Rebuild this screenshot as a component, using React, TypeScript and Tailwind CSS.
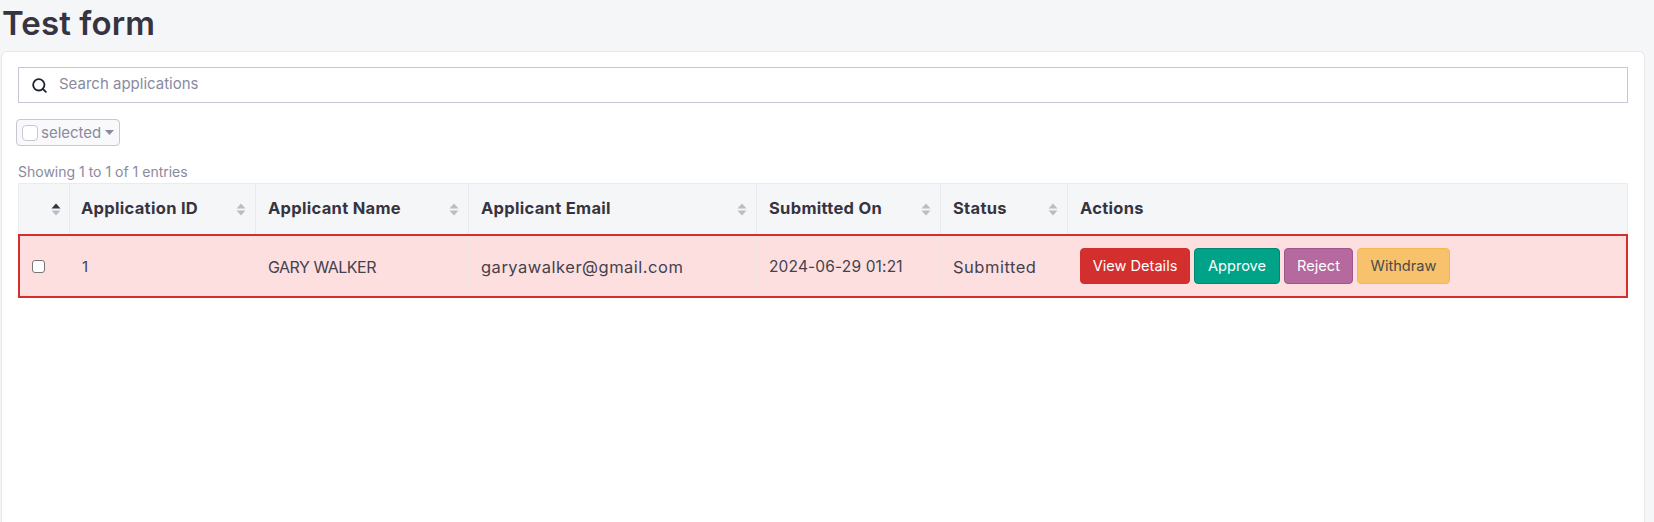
import { Search } from 'lucide-react';

const FONT = 'font-["Inter",sans-serif]';

const COLS = [
  { label: '', width: 'w-[51px]', pad: 'pr-[8px] pl-[30px]', sort: 'asc' },
  { label: 'Application ID', width: 'w-[186px]', pad: 'pl-[11px] pr-[9px]' },
  { label: 'Applicant Name', width: 'w-[213px]', pad: 'pl-[12px] pr-[9px]' },
  { label: 'Applicant Email', width: 'w-[288px]', pad: 'pl-[12px] pr-[9px]' },
  { label: 'Submitted On', width: 'w-[184px]', pad: 'pl-[12px] pr-[9px]' },
  { label: 'Status', width: 'w-[127px]', pad: 'pl-[12px] pr-[9px]' },
];

function SortIcon({ active }: { active?: boolean }) {
  return (
    <svg width="10" height="13" viewBox="0 0 10 13" className="shrink-0">
      <path d="M5 0.5 L9.5 5.5 H0.5 Z" fill={active ? '#353440' : '#bcbcc4'} />
      <path d="M5 12.5 L9.5 7.5 H0.5 Z" fill="#bcbcc4" />
    </svg>
  );
}

function ActionButton({ className, children }: { className: string; children: string }) {
  return (
    <button className={`flex h-[36px] items-center justify-center rounded-[4px] border pt-[2px] text-[14.6px] ${className}`}>
      {children}
    </button>
  );
}

export default function App() {
  return (
    <div className={`flex h-[522px] flex-col overflow-hidden bg-[#f5f6f8] ${FONT} text-[#353440]`}>
      <h1 className="h-[51px] pl-[2px] pt-[2px] text-[33px] leading-[42px] font-semibold tracking-[0.1px]">Test form</h1>

      <div className="ml-[1px] mr-[9px] flex-1 rounded-t-[6px] border border-b-0 border-[#e6e7eb] bg-white pt-[15px] pl-[16px] pr-[16px]">
        <div className="flex h-[36px] items-center border border-[#c8c6d8] bg-white">
          <Search size={17} strokeWidth={2.6} className="ml-[12px] text-[#1f2430]" />
          <span className="mb-[2px] ml-[11px] text-[15px] text-[#8a8a9e]">Search applications</span>
        </div>

        <div className="ml-[-2px] mt-[16px] flex h-[27px] w-[104px] items-center rounded-[4px] border border-[#c8c8d4] bg-[#f9f9fb] pl-[5px] text-[#8a8a9e]">
          <span className="h-[16px] w-[16px] shrink-0 rounded-[4px] border border-[#c8c8d4] bg-white" />
          <span className="ml-[3px] text-[15px] leading-none">selected</span>
          <svg width="9" height="5" viewBox="0 0 9 5" className="ml-[4px] shrink-0">
            <path d="M0 0 H9 L4.5 5 Z" fill="#8a8a9e" />
          </svg>
        </div>

        <p className="mt-[16px] h-[21px] text-[14px] leading-[20px] text-[#8a8a9e]">Showing 1 to 1 of 1 entries</p>

        <div className="flex h-[51px] border border-b-0 border-[#eaebef] bg-[#f5f6f8] font-bold">
          {COLS.map((c, i) => (
            <div
              key={i}
              className={`flex ${c.width} ${c.pad} shrink-0 items-center justify-between border-r border-[#e9eaee] text-[16.5px] tracking-[0.3px]`}
            >
              <span className="mb-[2px]">{c.label}</span>
              <SortIcon active={c.sort === 'asc'} />
            </div>
          ))}
          <div className="flex flex-1 items-center pb-[2px] pl-[12px] text-[16.5px] tracking-[0.3px]">Actions</div>
        </div>

        <div className="flex h-[64px] border-2 border-[#d32f2f] bg-[#fddfe0] text-[#43424e]">
          <div className="flex w-[50px] shrink-0 items-center border-r border-[#f3e4e6] pl-[12px]">
            <span className="h-[13px] w-[13px] rounded-[3px] border border-[#767676] bg-white" />
          </div>
          <div className="flex w-[186px] shrink-0 items-center border-r border-[#f3e4e6] pl-[12px] pt-[2px] text-[15px]">1</div>
          <div className="flex w-[213px] shrink-0 items-center border-r border-[#f3e4e6] pl-[12px] pt-[2px] text-[16px] tracking-[-0.5px]">GARY WALKER</div>
          <div className="flex w-[288px] shrink-0 items-center border-r border-[#f3e4e6] pl-[12px] pt-[2px] text-[16.5px] tracking-[0.5px]">garyawalker@gmail.com</div>
          <div className="flex w-[184px] shrink-0 items-center border-r border-[#f3e4e6] pl-[12px] pt-[2px] text-[15.5px] tracking-[0.15px]">2024-06-29 01:21</div>
          <div className="flex w-[127px] shrink-0 items-center border-r border-[#f3e4e6] pl-[12px] pt-[2px] text-[16.5px] tracking-[0.5px]">Submitted</div>
          <div className="flex flex-1 items-center gap-[4px] pl-[12px]">
            <ActionButton className="w-[110px] border-[#d32f2f] bg-[#d32f2f] text-white">View Details</ActionButton>
            <ActionButton className="w-[86px] border-[#00876f] bg-[#00a388] text-white">Approve</ActionButton>
            <ActionButton className="w-[69px] border-[#a0558b] bg-[#b5699f] text-white">Reject</ActionButton>
            <ActionButton className="w-[93px] border-[#f5b950] bg-[#f7c26b] text-[#4a4a4a]">Withdraw</ActionButton>
          </div>
        </div>
      </div>
    </div>
  );
}
